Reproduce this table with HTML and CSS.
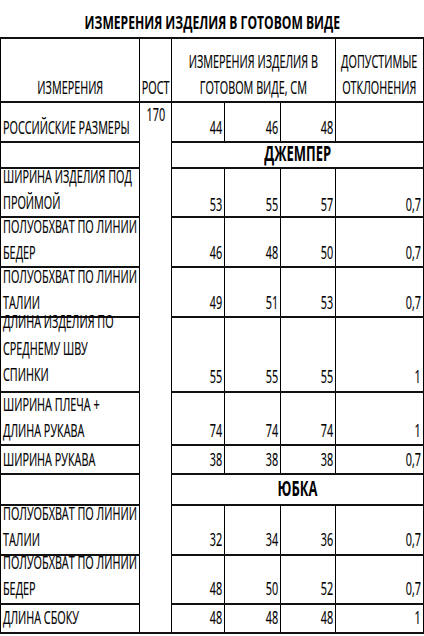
FILE: index.html
```html
<!DOCTYPE html>
<html lang="ru">
<head>
<meta charset="utf-8">
<title>Измерения изделия</title>
<link rel="stylesheet" href="styles.css">
</head>
<body>
<div class="sheet">
  <h1 class="title"><span class="sx">ИЗМЕРЕНИЯ ИЗДЕЛИЯ В ГОТОВОМ ВИДЕ</span></h1>
  <table class="grid">
    <colgroup>
      <col class="c-name"><col class="c-rost"><col class="c-s"><col class="c-m"><col class="c-l"><col class="c-tol">
    </colgroup>
    <tbody>
      <tr class="r-head">
        <td><div class="in mid"><span class="sx">ИЗМЕРЕНИЯ</span></div></td>
        <td class="tight"><div class="in mid"><span class="sx">РОСТ</span></div></td>
        <td colspan="3"><div class="in mid"><span class="sx">ИЗМЕРЕНИЯ ИЗДЕЛИЯ В<br>ГОТОВОМ ВИДЕ, СМ</span></div></td>
        <td><div class="in mid"><span class="sx">ДОПУСТИМЫЕ<br>ОТКЛОНЕНИЯ</span></div></td>
      </tr>
      <tr class="h40">
        <td><div class="in l"><span class="sx">РОССИЙСКИЕ РАЗМЕРЫ</span></div></td>
        <td rowspan="12" class="rost"><div class="in mid"><span class="sx">170</span></div></td>
        <td><div class="in r"><span class="sx">44</span></div></td>
        <td><div class="in r"><span class="sx">46</span></div></td>
        <td><div class="in r"><span class="sx">48</span></div></td>
        <td></td>
      </tr>
      <tr class="h26">
        <td></td>
        <td colspan="4" class="sec"><div class="in mid"><span class="sx">ДЖЕМПЕР</span></div></td>
      </tr>
      <tr class="h49 low">
        <td><div class="in l"><span class="sx">ШИРИНА ИЗДЕЛИЯ ПОД<br>ПРОЙМОЙ</span></div></td>
        <td><div class="in r"><span class="sx">53</span></div></td>
        <td><div class="in r"><span class="sx">55</span></div></td>
        <td><div class="in r"><span class="sx">57</span></div></td>
        <td><div class="in r"><span class="sx">0,7</span></div></td>
      </tr>
      <tr class="h50">
        <td><div class="in l"><span class="sx">ПОЛУОБХВАТ ПО ЛИНИИ<br>БЕДЕР</span></div></td>
        <td><div class="in r"><span class="sx">46</span></div></td>
        <td><div class="in r"><span class="sx">48</span></div></td>
        <td><div class="in r"><span class="sx">50</span></div></td>
        <td><div class="in r"><span class="sx">0,7</span></div></td>
      </tr>
      <tr class="h50">
        <td><div class="in l"><span class="sx">ПОЛУОБХВАТ ПО ЛИНИИ<br>ТАЛИИ</span></div></td>
        <td><div class="in r"><span class="sx">49</span></div></td>
        <td><div class="in r"><span class="sx">51</span></div></td>
        <td><div class="in r"><span class="sx">53</span></div></td>
        <td><div class="in r"><span class="sx">0,7</span></div></td>
      </tr>
      <tr class="h75 high">
        <td><div class="in l"><span class="sx">ДЛИНА ИЗДЕЛИЯ ПО<br>СРЕДНЕМУ ШВУ<br>СПИНКИ</span></div></td>
        <td><div class="in r"><span class="sx">55</span></div></td>
        <td><div class="in r"><span class="sx">55</span></div></td>
        <td><div class="in r"><span class="sx">55</span></div></td>
        <td><div class="in r"><span class="sx">1</span></div></td>
      </tr>
      <tr class="h53">
        <td><div class="in l"><span class="sx">ШИРИНА ПЛЕЧА +<br>ДЛИНА РУКАВА</span></div></td>
        <td><div class="in r"><span class="sx">74</span></div></td>
        <td><div class="in r"><span class="sx">74</span></div></td>
        <td><div class="in r"><span class="sx">74</span></div></td>
        <td><div class="in r"><span class="sx">1</span></div></td>
      </tr>
      <tr class="h29">
        <td><div class="in l"><span class="sx">ШИРИНА РУКАВА</span></div></td>
        <td><div class="in r"><span class="sx">38</span></div></td>
        <td><div class="in r"><span class="sx">38</span></div></td>
        <td><div class="in r"><span class="sx">38</span></div></td>
        <td><div class="in r"><span class="sx">0,7</span></div></td>
      </tr>
      <tr class="h31">
        <td></td>
        <td colspan="4" class="sec sec-b"><div class="in mid"><span class="sx">ЮБКА</span></div></td>
      </tr>
      <tr class="h50 mid-up">
        <td><div class="in l"><span class="sx">ПОЛУОБХВАТ ПО ЛИНИИ<br>ТАЛИИ</span></div></td>
        <td><div class="in r"><span class="sx">32</span></div></td>
        <td><div class="in r"><span class="sx">34</span></div></td>
        <td><div class="in r"><span class="sx">36</span></div></td>
        <td><div class="in r"><span class="sx">0,7</span></div></td>
      </tr>
      <tr class="h49 mid-up">
        <td><div class="in l"><span class="sx">ПОЛУОБХВАТ ПО ЛИНИИ<br>БЕДЕР</span></div></td>
        <td><div class="in r"><span class="sx">48</span></div></td>
        <td><div class="in r"><span class="sx">50</span></div></td>
        <td><div class="in r"><span class="sx">52</span></div></td>
        <td><div class="in r"><span class="sx">0,7</span></div></td>
      </tr>
      <tr class="h29 mid-up">
        <td><div class="in l"><span class="sx">ДЛИНА СБОКУ</span></div></td>
        <td><div class="in r"><span class="sx">48</span></div></td>
        <td><div class="in r"><span class="sx">48</span></div></td>
        <td><div class="in r"><span class="sx">48</span></div></td>
        <td><div class="in r"><span class="sx">1</span></div></td>
      </tr>
    </tbody>
  </table>
</div>
</body>
</html>
```

FILE: styles.css
```css
html, body {
  margin: 0;
  padding: 0;
  background: #fff;
}

body {
  font-family: "Open Sans", "DejaVu Sans", sans-serif;
  color: #000;
  --sx: 0.585;
}

.sheet {
  width: 424px;
}

.title {
  margin: 0;
  height: 27px;
  padding-top: 10px;
  display: flex;
  justify-content: center;
  font-size: 18.5px;
  font-weight: 700;
  line-height: 24px;
}

.title .sx {
  transform: scaleX(0.654);
  transform-origin: center;
}

.sx {
  display: inline-block;
  white-space: nowrap;
  transform: scaleX(var(--sx));
}

.grid {
  width: 423px;
  border-collapse: collapse;
  table-layout: fixed;
  font-size: 18.5px;
  font-weight: 400;
  -webkit-text-stroke: 0.2px #000;
}

.c-name { width: 139px; }
.c-rost { width: 32px; }
.c-s { width: 53px; }
.c-m { width: 56px; }
.c-l { width: 55px; }
.c-tol { width: 88px; }

.grid td {
  border-left: 1px solid #000;
  border-right: 1px solid #000;
  border-top: 2px solid #111;
  border-bottom: 2px solid #111;
  padding: 0 2px;
  vertical-align: bottom;
  overflow: visible;
}

/* fixed-height line holder: taller text grows upward like a spreadsheet cell */
.in {
  display: flex;
  align-items: flex-end;
  height: 20px;
  line-height: 26.7px;
}

.in.l { justify-content: flex-start; }
.in.r { justify-content: flex-end; }
.in.mid { justify-content: center; }

.in.l .sx { transform-origin: left center; }
.in.r .sx { transform-origin: right center; }
.in.mid .sx { transform-origin: center; text-align: center; }

.low .in { padding-bottom: 0; }
.low .in.r { margin-bottom: -2px; }
.high .in.l { padding-bottom: 3px; }
.high .in.r { padding-bottom: 1px; }
.mid-up .in { padding-bottom: 1px; }

.r-head { height: 64px; }
.r-head td.tight { padding: 0; }

.rost {
  vertical-align: top !important;
}
.rost .in {
  align-items: flex-start;
  line-height: 20px;
  padding-top: 1px;
}

.sec .in {
  font-weight: 700;
  font-size: 20.5px;
  line-height: 26px;
  padding-bottom: 1px;
  -webkit-text-stroke: 0;
}
.sec .sx { transform: scaleX(0.634); }
.sec-b .in { padding-bottom: 3px; }

.h26 { height: 26px; }
.h29 { height: 29px; }
.h31 { height: 31px; }
.h40 { height: 40px; }
.h49 { height: 49px; }
.h50 { height: 50px; }
.h53 { height: 53px; }
.h75 { height: 75px; }
```
